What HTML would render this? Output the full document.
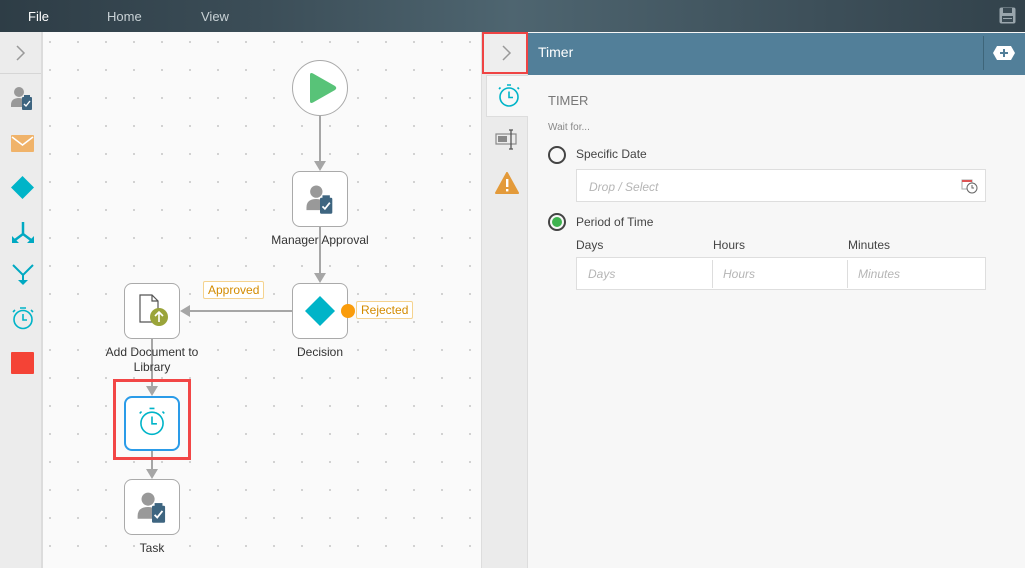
<!DOCTYPE html>
<html><head><style>
*{margin:0;padding:0;box-sizing:border-box}
body{width:1025px;height:568px;overflow:hidden;font-family:"Liberation Sans",sans-serif;background:#f7f7f7;position:relative}
.a{position:absolute}
.top{left:0;top:0;width:1025px;height:32px;background:linear-gradient(90deg,#2e3d46 0%,#3b4d57 25%,#4e6570 50%,#3d4f59 80%,#32424b 100%)}
.top span{position:absolute;top:9px;font-size:13px;color:#c9d2d6}
.left{left:0;top:32px;width:43px;height:536px;background:#ececec;border-right:2px solid #dcdcdc}
.canvas{left:43px;top:32px;width:439px;height:536px;background-color:#fafafa;background-image:radial-gradient(circle,#c4c4c4 0.8px,transparent 1px);background-size:28px 28px;background-position:-7px -4px;border-right:1px solid #ddd}
.node{width:56px;height:56px;border:1px solid #aaa;border-radius:8px;background:#fff}
.lbl{font-size:12px;color:#333;text-align:center}
.tag{font-size:12px;color:#d38b00;border:1px solid #f5d38f;background:#fff;padding:1px 4px;border-radius:2px}
.line{background:#a6a6a6}
.tabs{left:482px;top:32px;width:46px;height:536px;background:#ebebeb;border-right:1px solid #ddd}
.hdr{left:528px;top:33px;width:497px;height:42px;background:#527f99}
.inp{border:1px solid #dedede;background:#fff;height:33px}
.ph{font-size:12px;color:#b5b5b5;font-style:italic}
</style></head><body>
<div class="a top">
<span style="left:28px;color:#fff">File</span><span style="left:107px">Home</span><span style="left:201px">View</span>
<svg class="a" style="left:999px;top:7px" width="17" height="17" viewBox="0 0 17 17"><rect x="0.5" y="0.5" width="16" height="16" rx="2" fill="#9aa6ad"/><rect x="4" y="1" width="9" height="5" fill="#3a4a53"/><rect x="3" y="9" width="11" height="6" fill="#3a4a53"/><rect x="4" y="11" width="9" height="1" fill="#9aa6ad"/></svg>
</div>
<div class="a left">
<svg class="a" style="left:15px;top:12px" width="12" height="18"><path d="M2 2 L9 9 L2 16" stroke="#999" stroke-width="1.5" fill="none"/></svg>
<div class="a" style="left:0;top:41px;width:41px;height:1px;background:#d6d6d6"></div>
<svg class="a" style="left:10px;top:53px" width="24" height="26" viewBox="0 0 24 26"><circle cx="9" cy="7" r="5" fill="#999"/><path d="M1 20 Q1 13 9 13 Q14 13 14 16 V22 H1Z" fill="#999"/><rect x="12" y="12" width="10" height="13" rx="1" fill="#3e6580"/><rect x="14" y="10" width="6" height="3" fill="#3e6580"/><path d="M14 19 l2 2 l4-5" stroke="#fff" stroke-width="1.4" fill="none"/></svg>
<svg class="a" style="left:11px;top:103px" width="23" height="17"><rect width="23" height="17" rx="1" fill="#f0b36a"/><path d="M1 2 L11.5 10 L22 2" stroke="#fff" stroke-width="1.5" fill="none"/></svg>
<svg class="a" style="left:11px;top:144px" width="23" height="23"><path d="M11.5 0 L23 11.5 L11.5 23 L0 11.5Z" fill="#00b4c8"/></svg>
<svg class="a" style="left:11px;top:188px" width="24" height="24" viewBox="0 0 24 24"><path d="M12 2 V14 M12 14 L4 20 M12 14 L20 20" stroke="#00a9c2" stroke-width="2.5" fill="none"/><path d="M1 16 V23 H8Z M23 16 V23 H16Z" fill="#00a9c2"/></svg>
<svg class="a" style="left:11px;top:231px" width="24" height="24" viewBox="0 0 24 24"><path d="M2 2 L12 12 L22 2 M12 12 V20" stroke="#00a9c2" stroke-width="2" fill="none"/><path d="M7 17 H17 L12 22Z" fill="#00a9c2"/></svg>
<svg class="a" style="left:11px;top:274px" width="24" height="24" viewBox="0 0 24 24"><circle cx="12" cy="13.5" r="9" stroke="#00b4c8" stroke-width="1.6" fill="none"/><path d="M12 8 V14 H16" stroke="#00b4c8" stroke-width="1.6" fill="none"/><path d="M9 2 H15 M2 6 L4 4 M22 6 L20 4" stroke="#00b4c8" stroke-width="1.6"/></svg>
<div class="a" style="left:11px;top:320px;width:23px;height:22px;background:#f44336;border-radius:1px"></div>
</div>
<div class="a canvas"></div>
<div class="a line" style="left:319px;top:116px;width:2px;height:48px"></div>
<svg class="a" style="left:314px;top:161px" width="12" height="10"><path d="M0 0 H12 L6 10Z" fill="#a6a6a6"/></svg>
<div class="a line" style="left:319px;top:227px;width:2px;height:49px"></div>
<svg class="a" style="left:314px;top:273px" width="12" height="10"><path d="M0 0 H12 L6 10Z" fill="#a6a6a6"/></svg>
<div class="a line" style="left:188px;top:310px;width:104px;height:2px"></div>
<svg class="a" style="left:180px;top:305px" width="10" height="12"><path d="M0 6 L10 0 V12Z" fill="#a6a6a6"/></svg>
<div class="a line" style="left:151px;top:339px;width:2px;height:50px"></div>
<svg class="a" style="left:146px;top:386px" width="12" height="10"><path d="M0 0 H12 L6 10Z" fill="#a6a6a6"/></svg>
<div class="a line" style="left:151px;top:450px;width:2px;height:22px"></div>
<svg class="a" style="left:146px;top:469px" width="12" height="10"><path d="M0 0 H12 L6 10Z" fill="#a6a6a6"/></svg>
<div class="a" style="left:292px;top:60px;width:56px;height:56px;border-radius:50%;border:1px solid #aaa;background:#fff"></div>
<svg class="a" style="left:308px;top:72px" width="30" height="32"><path d="M2 3 Q2 0 5 1.5 L27 14 Q29.5 16 27 18 L5 30.5 Q2 32 2 29Z" fill="#58c378"/></svg>
<div class="a node" style="left:292px;top:171px"></div>
<svg class="a" style="left:304px;top:183px" width="32" height="32" viewBox="0 0 24 26"><circle cx="9" cy="7" r="5" fill="#999"/><path d="M1 20 Q1 13 9 13 Q14 13 14 16 V22 H1Z" fill="#999"/><rect x="12" y="12" width="10" height="13" rx="1" fill="#3e6580"/><rect x="14" y="10" width="6" height="3" fill="#3e6580"/><path d="M14 19 l2 2 l4-5" stroke="#fff" stroke-width="1.4" fill="none"/></svg>
<div class="a lbl" style="left:250px;top:233px;width:140px">Manager Approval</div>
<div class="a node" style="left:292px;top:283px"></div>
<svg class="a" style="left:305px;top:296px" width="30" height="30"><path d="M15 0 L30 15 L15 30 L0 15Z" fill="#00b4c8"/></svg>
<div class="a" style="left:341px;top:304px;width:14px;height:14px;border-radius:50%;background:#fa9c0b"></div>
<div class="a tag" style="left:356px;top:301px">Rejected</div>
<div class="a lbl" style="left:270px;top:345px;width:100px">Decision</div>
<div class="a tag" style="left:203px;top:281px">Approved</div>
<div class="a node" style="left:124px;top:283px"></div>
<svg class="a" style="left:138px;top:294px" width="32" height="34" viewBox="0 0 32 34"><path d="M2 1 H14 L20 7 V28 H2Z M14 1 V7 H20" stroke="#555" stroke-width="1.2" fill="none"/><circle cx="21" cy="23" r="9" fill="#9aa43a"/><path d="M21 28 V18 M17 22 L21 18 L25 22" stroke="#fff" stroke-width="1.6" fill="none"/></svg>
<div class="a lbl" style="left:92px;top:345px;width:120px;line-height:15px">Add Document to<br>Library</div>
<div class="a" style="left:113px;top:379px;width:78px;height:81px;border:3px solid #f24646"></div>
<div class="a node" style="left:124px;top:396px;border:2px solid #2a9be8;height:55px"></div>
<svg class="a" style="left:137px;top:406px" width="30" height="32" viewBox="0 0 24 26"><circle cx="12" cy="14" r="9" stroke="#00b4c8" stroke-width="1.3" fill="none"/><path d="M12 8.5 V14.5 H16" stroke="#00b4c8" stroke-width="1.3" fill="none"/><path d="M10 2 H14 M2 6 L3.5 4.5 M22 6 L20.5 4.5" stroke="#00b4c8" stroke-width="1.3"/></svg>
<div class="a node" style="left:124px;top:479px"></div>
<svg class="a" style="left:136px;top:490px" width="32" height="34" viewBox="0 0 24 26"><circle cx="9" cy="7" r="5" fill="#999"/><path d="M1 20 Q1 13 9 13 Q14 13 14 16 V22 H1Z" fill="#999"/><rect x="12" y="12" width="10" height="13" rx="1" fill="#3e6580"/><rect x="14" y="10" width="6" height="3" fill="#3e6580"/><path d="M14 19 l2 2 l4-5" stroke="#fff" stroke-width="1.4" fill="none"/></svg>
<div class="a lbl" style="left:102px;top:541px;width:100px">Task</div>
<div class="a tabs"></div>
<div class="a" style="left:486px;top:75px;width:42px;height:42px;background:#f7f7f7;border:1px solid #ddd;border-right:none"></div>
<svg class="a" style="left:497px;top:83px" width="24" height="26" viewBox="0 0 24 26"><circle cx="12" cy="14" r="9" stroke="#00b4c8" stroke-width="1.6" fill="none"/><path d="M12 8.5 V14.5 H16" stroke="#00b4c8" stroke-width="1.6" fill="none"/><path d="M10 2 H14 M2 6 L3.5 4.5 M22 6 L20.5 4.5" stroke="#00b4c8" stroke-width="1.6"/></svg>
<svg class="a" style="left:495px;top:129px" width="22" height="22"><rect x="1" y="5" width="20" height="10" fill="none" stroke="#888" stroke-width="1.2"/><rect x="3" y="7" width="9" height="6" fill="#888"/><path d="M14 1 H18 M16 1 V20 M14 20 H18" stroke="#555" stroke-width="1.3"/></svg>
<svg class="a" style="left:495px;top:172px" width="24" height="22"><path d="M12 1 L23 21 H1Z" fill="#e39a3a" stroke="#e39a3a" stroke-linejoin="round" stroke-width="2"/><rect x="11" y="7" width="2.4" height="8" fill="#fff"/><rect x="11" y="17" width="2.4" height="2.4" fill="#fff"/></svg>
<div class="a" style="left:482px;top:32px;width:46px;height:42px;background:#eee;border:2px solid #ef4444"></div>
<svg class="a" style="left:501px;top:44px" width="12" height="18"><path d="M2 2 L9 9 L2 16" stroke="#999" stroke-width="1.5" fill="none"/></svg>
<div class="a hdr"><span class="a" style="left:10px;top:11px;color:#fff;font-size:14px">Timer</span>
<div class="a" style="left:455px;top:3px;width:1px;height:34px;background:#3e6579"></div>
<svg class="a" style="left:464px;top:12px" width="24" height="16"><path d="M5 1 H19 L23 8 L19 15 H5 L1 8Z" fill="#fff"/><path d="M12 4 V12 M8 8 H16" stroke="#527f99" stroke-width="2"/></svg></div>
<div class="a" style="left:548px;top:93px;font-size:13px;color:#777">TIMER</div>
<div class="a" style="left:548px;top:122px;font-size:10px;color:#888">Wait for...</div>
<div class="a" style="left:548px;top:146px;width:18px;height:18px;border-radius:50%;border:2px solid #444"></div>
<div class="a" style="left:576px;top:147px;font-size:12px;color:#444">Specific Date</div>
<div class="a inp" style="left:576px;top:169px;width:410px"><span class="a ph" style="left:12px;top:10px">Drop / Select</span>
<svg class="a" style="left:384px;top:8px" width="17" height="16"><rect x="1" y="2" width="10" height="9" fill="none" stroke="#aaa"/><rect x="1" y="2" width="10" height="2" fill="#d55"/><circle cx="11" cy="10" r="5" fill="#fff" stroke="#666"/><path d="M11 7 V10 H13" stroke="#666" fill="none"/></svg></div>
<div class="a" style="left:548px;top:213px;width:18px;height:18px;border-radius:50%;border:2px solid #444"><div class="a" style="left:2px;top:2px;width:10px;height:10px;border-radius:50%;background:#3fb34f"></div></div>
<div class="a" style="left:576px;top:215px;font-size:12px;color:#444">Period of Time</div>
<div class="a" style="left:576px;top:238px;font-size:12px;color:#444">Days</div>
<div class="a" style="left:713px;top:238px;font-size:12px;color:#444">Hours</div>
<div class="a" style="left:848px;top:238px;font-size:12px;color:#444">Minutes</div>
<div class="a inp" style="left:576px;top:257px;width:410px"><span class="a ph" style="left:11px;top:9px">Days</span>
<div class="a" style="left:135px;top:2px;width:1px;height:28px;background:#ddd"></div><span class="a ph" style="left:146px;top:9px">Hours</span>
<div class="a" style="left:270px;top:2px;width:1px;height:28px;background:#ddd"></div><span class="a ph" style="left:281px;top:9px">Minutes</span></div>
</body></html>
